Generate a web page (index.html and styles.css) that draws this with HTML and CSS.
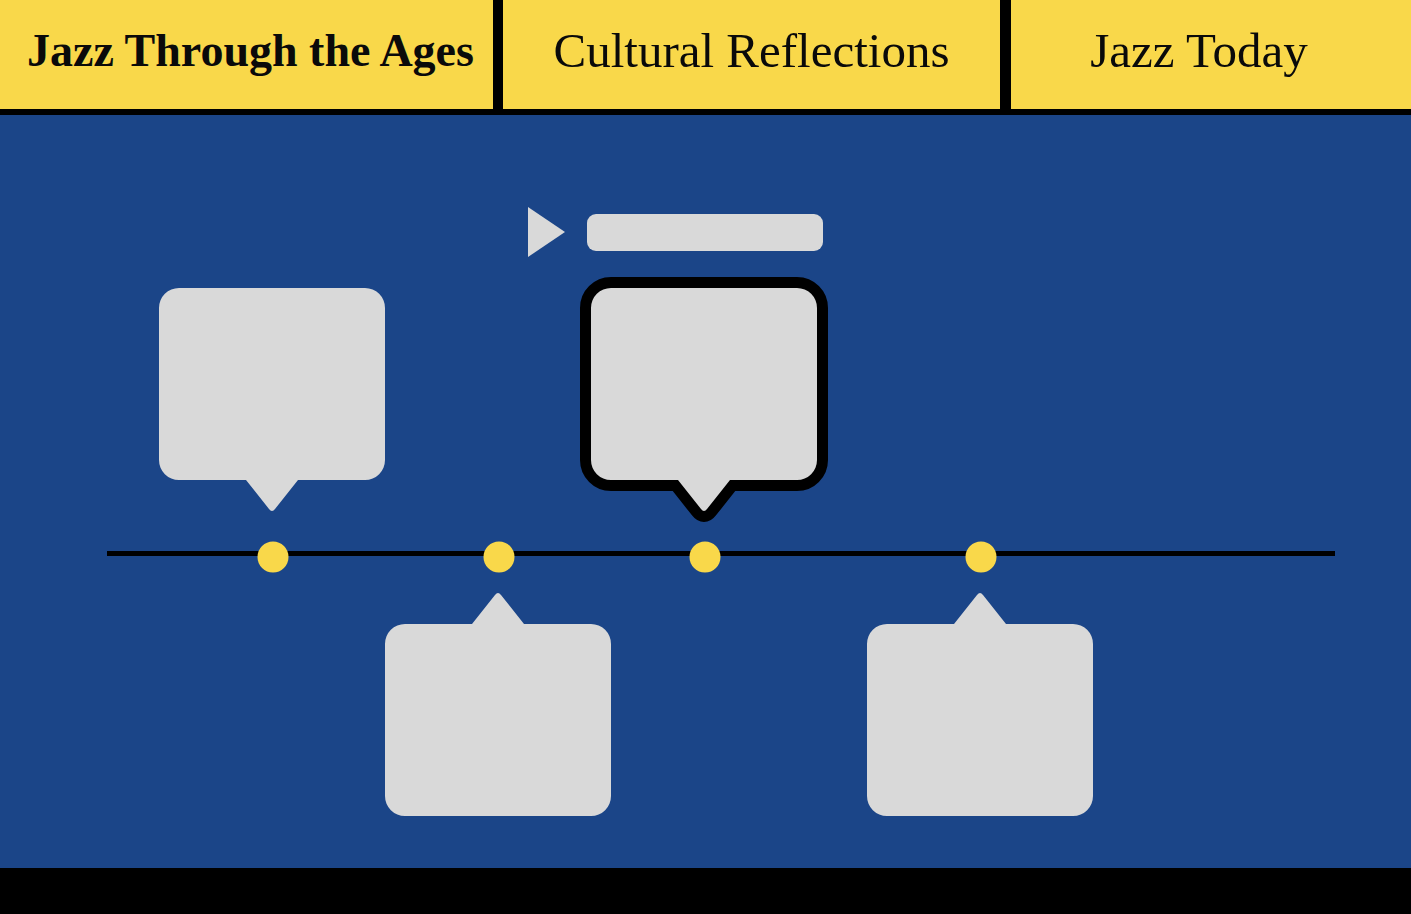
FILE: index.html
```html
<!DOCTYPE html>
<html lang="en">
<head>
<meta charset="utf-8">
<title>Jazz Through the Ages</title>
<link rel="stylesheet" href="styles.css">
</head>
<body>
<header class="topnav">
  <a class="nav-item nav-first" href="#">Jazz Through the Ages</a>
  <a class="nav-item nav-second" href="#">Cultural Reflections</a>
  <a class="nav-item nav-third" href="#">Jazz Today</a>
</header>
<main class="stage">
  <div class="player">
    <span class="play-btn"></span>
    <span class="progress"></span>
  </div>
  <div class="timeline">
    <div class="event" style="left:166px">
      <svg class="bubble bubble-up" viewBox="0 0 226 223" width="226" height="223">
        <path d="M20,0 H206 A20 20 0 0 1 226 20 V172 A20 20 0 0 1 206 192 H139 L116,221 Q113,225 110,221 L87,192 H20 A20 20 0 0 1 0 172 V20 A20 20 0 0 1 20 0 Z"/>
      </svg>
      <span class="dot"></span>
    </div>
    <div class="event" style="left:392px">
      <svg class="bubble bubble-down" viewBox="0 0 226 223" width="226" height="223">
        <path d="M87,31 L110,2 Q113,-2 116,2 L139,31 H206 A20 20 0 0 1 226 51 V203 A20 20 0 0 1 206 223 H20 A20 20 0 0 1 0 203 V51 A20 20 0 0 1 20 31 Z"/>
      </svg>
      <span class="dot"></span>
    </div>
    <div class="event" style="left:598px">
      <svg class="bubble bubble-up bubble-active" viewBox="0 0 226 223" width="226" height="223">
        <path d="M20,0 H206 A20 20 0 0 1 226 20 V172 A20 20 0 0 1 206 192 H139 L116,221 Q113,225 110,221 L87,192 H20 A20 20 0 0 1 0 172 V20 A20 20 0 0 1 20 0 Z"/>
      </svg>
      <span class="dot"></span>
    </div>
    <div class="event" style="left:874px">
      <svg class="bubble bubble-down" viewBox="0 0 226 223" width="226" height="223">
        <path d="M87,31 L110,2 Q113,-2 116,2 L139,31 H206 A20 20 0 0 1 226 51 V203 A20 20 0 0 1 206 223 H20 A20 20 0 0 1 0 203 V51 A20 20 0 0 1 20 31 Z"/>
      </svg>
      <span class="dot"></span>
    </div>
  </div>
</main>
<footer class="footer"></footer>
</body>
</html>
```

FILE: styles.css
```css
* { box-sizing: border-box; }

html, body {
  margin: 0;
  padding: 0;
}

body {
  height: 914px;
  display: flex;
  flex-direction: column;
  background: #000;
  font-family: "Liberation Serif", "Times New Roman", serif;
  overflow: hidden;
}

.topnav {
  display: flex;
  height: 115px;
  background: #f9d84a;
  border-bottom: 6px solid #000;
  flex: 0 0 auto;
}

.nav-item {
  display: flex;
  align-items: center;
  justify-content: center;
  padding-bottom: 8px;
  color: #0a0a0a;
  text-decoration: none;
  white-space: nowrap;
}

.nav-first {
  width: 493px;
  font-weight: 700;
  font-size: 46px;
  padding-left: 8px;
}

.nav-second {
  width: 507px;
  border-left: 10px solid #000;
  font-size: 49px;
}

.nav-third {
  flex: 1;
  border-left: 11px solid #000;
  font-size: 49px;
  padding-right: 24px;
}

.stage {
  flex: 1 1 auto;
  background: #1b4588;
  padding-top: 92px;
}

.player {
  display: flex;
  align-items: center;
  margin-left: 528px;
  height: 50px;
}

.play-btn {
  width: 0;
  height: 0;
  border-left: 37px solid #d9d9d9;
  border-top: 25px solid transparent;
  border-bottom: 25px solid transparent;
}

.progress {
  width: 236px;
  height: 37px;
  margin-left: 22px;
  background: #d9d9d9;
  border-radius: 9px;
}

.timeline {
  position: relative;
  margin-top: 294px;
  margin-left: 107px;
  width: 1228px;
  height: 5px;
  background: #000;
}

.event {
  position: absolute;
  top: 0;
  width: 0;
  height: 0;
}

.dot {
  position: absolute;
  left: 0;
  top: 6px;
  width: 31px;
  height: 31px;
  border-radius: 50%;
  background: #f9d84a;
  transform: translate(-50%, -50%);
}

.bubble {
  position: absolute;
  left: -114px;
  overflow: visible;
}

.bubble path {
  fill: #d9d9d9;
}

.bubble-up {
  top: -263px;
}

.bubble-down {
  top: 42px;
}

.bubble-active path {
  stroke: #000;
  stroke-width: 22px;
  stroke-linejoin: round;
  paint-order: stroke;
}

.footer {
  flex: 0 0 46px;
  background: #000;
}
```
